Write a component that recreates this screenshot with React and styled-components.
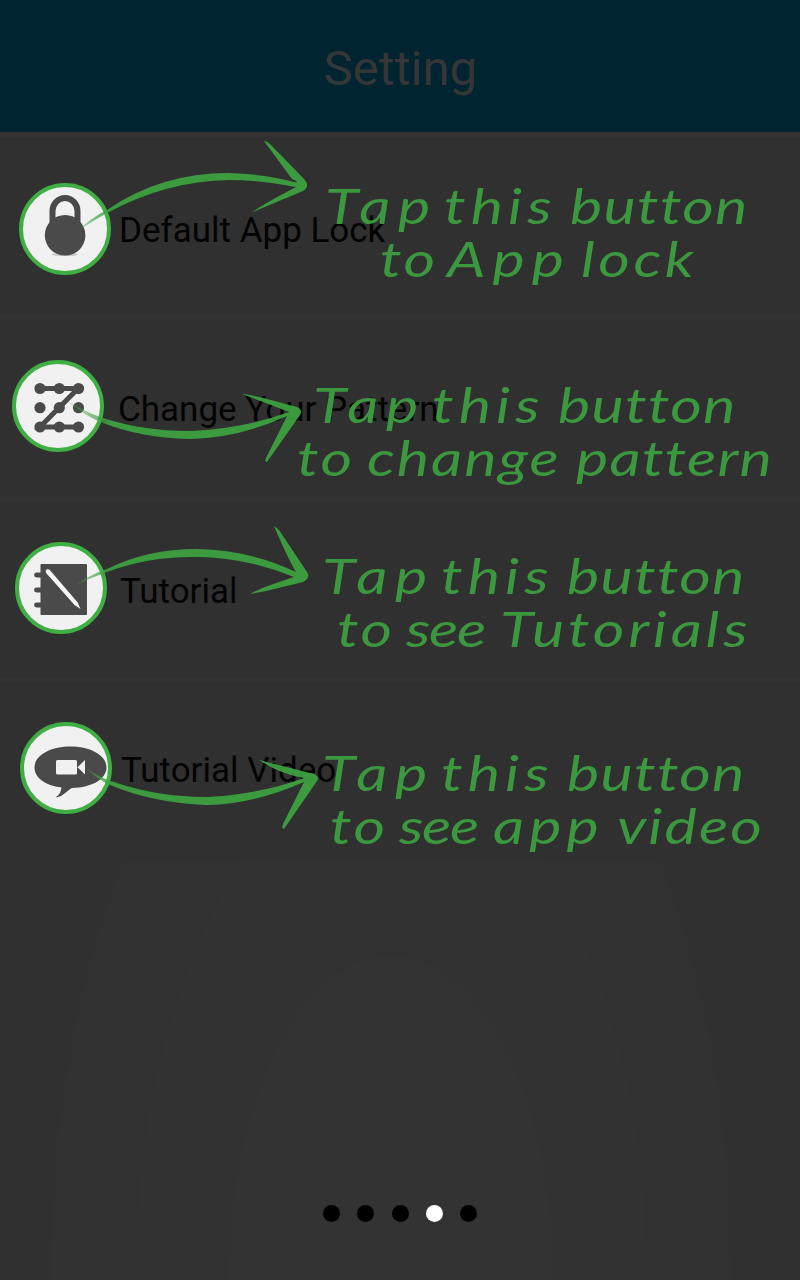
import React from "react";
import styled, { createGlobalStyle } from "styled-components";

const GlobalStyle = createGlobalStyle`
  * { box-sizing: border-box; }
  body { margin: 0; background: #303030; }
`;

const Screen = styled.div`
  position: relative;
  display: flex;
  flex-direction: column;
  width: 800px;
  height: 1280px;
  overflow: hidden;
  background: #303030;
  font-family: Roboto, sans-serif;
`;

const Header = styled.header`
  display: flex;
  flex: none;
  align-items: center;
  justify-content: center;
  height: 132px;
  padding-top: 5px;
  padding-left: 1px;
  background: #002430;
`;

const Title = styled.h1`
  margin: 0;
  font-size: 49px;
  font-weight: 400;
  line-height: 58px;
  color: #363636;
`;

const List = styled.main`
  display: flex;
  flex: none;
  flex-direction: column;
`;

const Row = styled.section`
  display: flex;
  align-items: flex-start;
  height: 182px;
  border-top: 5px solid #333333;
  padding-left: ${(p) => p.$left}px;
  padding-top: ${(p) => p.$top}px;
`;

const IconCircle = styled.div`
  display: flex;
  flex: none;
  width: 92px;
  height: 92px;
  border: 4px solid #3fae43;
  border-radius: 50%;
  background: #f1f1f1;
  overflow: hidden;

  svg { display: block; width: 84px; height: 84px; }
`;

const Label = styled.span`
  margin-left: ${(p) => p.$gap}px;
  margin-top: ${(p) => p.$drop}px;
  font-size: 35px;
  line-height: 42px;
  white-space: nowrap;
  color: #030303;
`;

const Footer = styled.footer`
  display: flex;
  flex: 1;
  align-items: flex-end;
  justify-content: center;
  gap: 17.2px;
  padding-bottom: 58px;
  background: radial-gradient(
    ellipse 340px 680px at 391px 100%,
    #333333 0 47.6%,
    #323232 47.7% 75%,
    #313131 75.1% 99.9%,
    #303030 100%
  );
`;

const Dot = styled.i`
  width: 17px;
  height: 17px;
  border-radius: 50%;
  background: ${(p) => (p.$active ? "#ffffff" : "#000000")};
`;

const Arrows = styled.svg`
  position: absolute;
  inset: 0;
  fill-opacity: 0.92;
`;

const Note = styled.p`
  position: absolute;
  top: ${(p) => p.$top}px;
  left: 0;
  margin: 0;
  font-family: Lato, sans-serif;
  font-size: 48px;
  font-style: italic;
  line-height: 53px;
  color: #3c983f;
`;

const NoteLine = styled.span`
  display: flex;
  padding-left: ${(p) => p.$left}px;
`;

const Word = styled.span`
  flex: none;
  width: ${(p) => p.$width}px;
  letter-spacing: ${(p) => p.$spacing}px;
  white-space: nowrap;
  transform: scaleX(1.27);
  transform-origin: left;
`;

const LockIcon = () => (
  <svg viewBox="0 0 84 84">
    <ellipse cx="42" cy="67.500" rx="13" ry="1.600" fill="#c9c9c9" />
    <path d="M29.500 40V24a12.500 13 0 0 1 25 0v16" fill="none" stroke="#4a4a4a" strokeWidth="6" />
    <circle cx="42.100" cy="48.300" r="20.300" fill="#4a4a4a" />
  </svg>
);

const PatternIcon = () => (
  <svg viewBox="0 0 84 84" fill="#4a4a4a">
    <path d="M24 24.500H62L24 63H62" fill="none" stroke="#4a4a4a" strokeWidth="5" />
    {[24.5, 43.7, 63].map((y) =>
      [24, 43.3, 62.5].map((x) => <circle key={`${x}-${y}`} cx={x} cy={y} r="5.6" />)
    )}
  </svg>
);

const NotebookIcon = () => (
  <svg viewBox="0 0 84 84" fill="#4a4a4a">
    <rect x="21.500" y="18" width="46.500" height="51" rx="1" />
    <path d="M22 29H17.500M22 44H17.500M22 59H17.500" stroke="#4a4a4a" strokeWidth="4.800" strokeLinecap="round" />
    <path d="M26.900 26.800Q26 24.500 27.500 23.500Q29.500 22.800 30.800 24L58.700 56.500L61.500 63L55.500 59Z" fill="#f5f5f5" />
  </svg>
);

const VideoIcon = () => (
  <svg viewBox="0 0 84 84">
    <path d="M46.500 20.500C67 20.500 82.500 29.500 82.500 41.500C82.500 53 68 61.500 48 62C43 64.500 38.500 71 31.500 71.500C36 68.500 37 65 37.500 61.500C21 59.500 10.500 51.500 10.500 41.500C10.500 29.500 26 20.500 46.500 20.500Z" fill="#4a4a4a" />
    <rect x="32" y="34" width="21" height="14.500" rx="1.500" fill="#f1f1f1" />
    <path d="M53.500 41.200L61 34V48.500Z" fill="#f1f1f1" />
  </svg>
);

const rows = [
  { label: "Default App Lock", Icon: LockIcon, left: 19, top: 46, gap: 8, drop: 27 },
  { label: "Change Your Pattern", Icon: PatternIcon, left: 12, top: 41, gap: 14, drop: 29 },
  { label: "Tutorial", Icon: NotebookIcon, left: 15, top: 41, gap: 13, drop: 29 },
  { label: "Tutorial Video", Icon: VideoIcon, left: 20, top: 39, gap: 9, drop: 28 },
];

const tap = [["Tap", 119, 6], ["this", 126, 4], ["button", 180, 1]];

const notes = [
  { top: 179, lines: [
    [325, tap],
    [380, [["to", 67, 2], ["App", 134, 5.5], ["lock", 115, 2.8]]],
  ] },
  { top: 378, lines: [
    [313, tap],
    [297, [["to", 70, 2], ["change", 209, 1.6], ["pattern", 198, 1]]],
  ] },
  { top: 549, lines: [
    [322, tap],
    [337, [["to", 69, 2], ["see", 94, -1], ["Tutorials", 253, 3]]],
  ] },
  { top: 746, lines: [
    [322, tap],
    [330, [["to", 69, 2], ["see", 94, -1], ["app", 124, 4], ["video", 146, 1.7]]],
  ] },
];

export default function App() {
  return (
    <Screen>
      <GlobalStyle />
      <Header><Title>Setting</Title></Header>
      <List>
        {rows.map(({ label, Icon, left, top, gap, drop }) => (
          <Row key={label} $left={left} $top={top}>
            <IconCircle><Icon /></IconCircle>
            <Label $gap={gap} $drop={drop}>{label}</Label>
          </Row>
        ))}
      </List>
      <Footer>
        {[0, 1, 2, 3, 4].map((i) => <Dot key={i} $active={i === 3} />)}
      </Footer>
      <Arrows width="800" height="1280" viewBox="0 0 800 1280">
        <defs>
          <linearGradient id="tail" gradientUnits="userSpaceOnUse" x1="66" y1="0" x2="112" y2="0">
            <stop offset="0" stopColor="#3da340" stopOpacity="0.2" />
            <stop offset="1" stopColor="#3da340" />
          </linearGradient>
        </defs>
        <g fill="url(#tail)">
          <path d="M79 230Q92 217 107 210Q160 173 229 173Q265 174 294 182Q301 183 292 179L264 141Q267 141 271 145L305 180Q310 187 303 191L253 212Q258 207 296 187Q262 180 229 180Q166 181 107 213Q96 219 79 230Z" />
          <path d="M66 400Q83 411 100 417Q141 431 190 431Q242 429 289 412L242 394Q250 394 297 407Q303 410 300 415L267 462Q264 462 266 458L287 416Q239 438 190 439Q139 438 98 421Q81 413 66 400Z" />
          <path d="M76 585Q91 574 107 569Q147 549 197 549Q250 550 296 572Q290 563 274 526Q279 529 283 536L307 572Q311 578 303 582L266 591L250 594Q260 588 294 577Q244 557 197 557Q149 556 107 572Q93 577 76 585Z" />
          <path d="M85 767Q99 778 114 782Q157 797 207 797Q261 794 304 778Q280 774 259 760L314 774Q320 777 317 781L284 829Q281 828 283 824L304 782Q254 804 207 805Q153 803 110 785Q97 779 85 767Z" />
        </g>
      </Arrows>
      {notes.map(({ top, lines }) => (
        <Note key={top} $top={top}>
          {lines.map(([left, words]) => (
            <NoteLine key={left} $left={left}>
              {words.map(([text, width, spacing]) => (
                <Word key={text} $width={width} $spacing={spacing}>{text}</Word>
              ))}
            </NoteLine>
          ))}
        </Note>
      ))}
    </Screen>
  );
}
